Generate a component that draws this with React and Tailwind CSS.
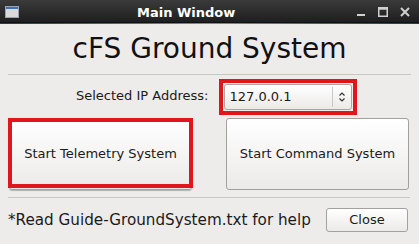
export default function App() {
  return (
    <div
      className="w-[419px] h-[244px] bg-[#edeceb] flex flex-col overflow-hidden text-[#1a1a1a]"
      style={{ fontFamily: '"DejaVu Sans", sans-serif' }}
    >
      {/* title bar */}
      <div className="relative h-[24px] shrink-0 bg-gradient-to-b from-[#3b3b3b] to-[#1c1c1c] flex items-center">
        <div className="absolute left-0 right-0 bottom-0 h-[1px] bg-gradient-to-r from-[#2a3a50] via-[#6d8fb8] to-[#2a3a50]" />
        <div className="absolute left-0 right-0 bottom-[1px] h-[1px] bg-[#111]" />
        <div className="ml-[5px] w-[14px] h-[12px] border border-[#9aa4b0] bg-[#d8dadd] flex flex-col">
          <div className="h-[2px] bg-[#3f6fb5]" />
        </div>
        <div className="ml-[118px] text-white font-bold text-[13px] leading-none mt-[1px]">Main Window</div>
        <div className="ml-auto flex items-center mr-[9px] gap-[12px] text-[#d8d8d8]">
          <svg width="10" height="10" viewBox="0 0 10 10"><rect x="1" y="7" width="8" height="2" fill="#d0d0d0" /></svg>
          <svg width="10" height="10" viewBox="0 0 10 10"><rect x="0.75" y="0.75" width="8.5" height="8.5" fill="none" stroke="#d0d0d0" strokeWidth="1.5" /><rect x="0.75" y="0.75" width="8.5" height="2" fill="#d0d0d0" /></svg>
          <svg width="10" height="10" viewBox="0 0 10 10"><path d="M1 1 L9 9 M9 1 L1 9" stroke="#d0d0d0" strokeWidth="2" /></svg>
        </div>
      </div>

      {/* heading */}
      <div className="h-[50px] shrink-0 flex items-center justify-center text-[28px] text-[#111]">
        cFS Ground System
      </div>
      <div className="mx-[8px] h-[1px] bg-[#c8c7c5] shrink-0" />

      {/* IP row */}
      <div className="h-[42px] shrink-0 flex items-center pl-[76px]">
        <span className="text-[13px]">Selected IP Address:</span>
        <div className="ml-[11px] border-[4px] border-[#e0161c] p-[1px] w-[138px] h-[36px] mt-[2px]">
          <div className="h-full rounded-[3px] border border-[#a8a6a3] bg-gradient-to-b from-[#ffffff] to-[#ebeae8] flex items-center">
            <span className="text-[13px] pl-[4px] flex-1">127.0.0.1</span>
            <div className="w-[1px] h-[20px] bg-[#c9c8c6]" />
            <svg className="mx-[5px]" width="8" height="12" viewBox="0 0 8 12">
              <path d="M1.5 4.5 L4 2 L6.5 4.5 M1.5 7.5 L4 10 L6.5 7.5" fill="none" stroke="#333" strokeWidth="1.2" />
            </svg>
          </div>
        </div>
      </div>

      {/* buttons */}
      <div className="h-[80px] shrink-0 flex items-start pt-[1px] pl-[9px] gap-[34px]">
        <div className="relative w-[183px] h-[72px] rounded-[3px] border border-[#a3a19e] bg-gradient-to-b from-[#ffffff] to-[#eceae8] shadow-[0_1px_1px_rgba(0,0,0,0.25)] flex items-center justify-center text-[13px]">
          Start Telemetry System
          <div className="absolute left-[-2px] top-[-1px] w-[185px] h-[70px] border-[4px] border-[#e0161c]" />
        </div>
        <div className="w-[183px] h-[72px] rounded-[3px] border border-[#a3a19e] bg-gradient-to-b from-[#ffffff] to-[#eceae8] flex items-center justify-center text-[13px]">
          Start Command System
        </div>
      </div>
      <div className="mx-[8px] mr-[9px] h-[1px] bg-[#c8c7c5] shrink-0" />

      {/* footer */}
      <div className="h-[44px] shrink-0 flex items-center pl-[8px]">
        <span className="text-[15.2px]">*Read Guide-GroundSystem.txt for help</span>
        <div className="ml-auto mr-[11px] w-[82px] h-[24px] rounded-[3px] border border-[#a3a19e] bg-gradient-to-b from-[#ffffff] to-[#eceae8] flex items-center justify-center text-[13px]">
          Close
        </div>
      </div>
    </div>
  );
}
